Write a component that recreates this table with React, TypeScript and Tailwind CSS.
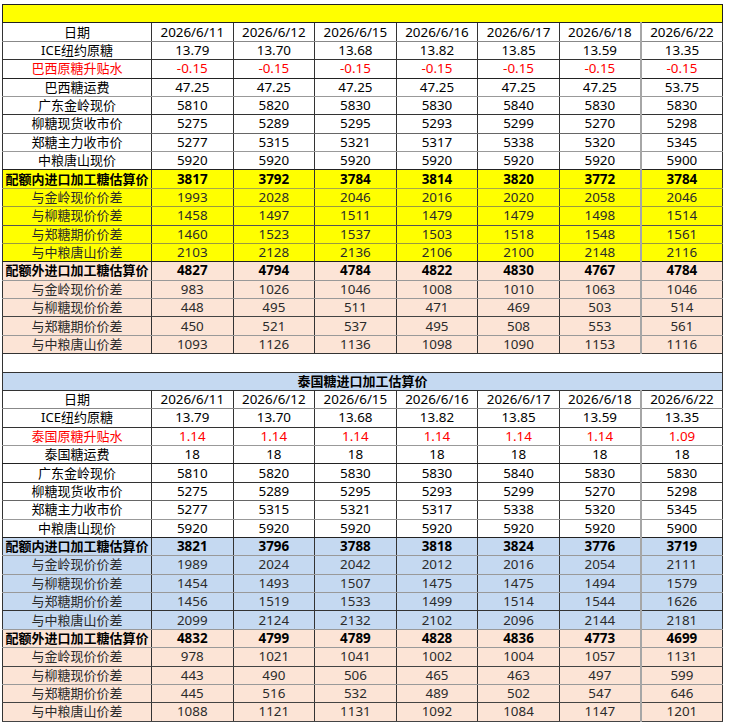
const dates = ["2026/6/11", "2026/6/12", "2026/6/15", "2026/6/16", "2026/6/17", "2026/6/18", "2026/6/22"]

type Row = {
  label: string
  values: string[]
  kind: "plain" | "red" | "bold" | "sub"
  bg: string
  line?: string
}

const common = (bg = "bg-white"): Row[] => [
  { label: "广东金岭现价", values: ["5810", "5820", "5830", "5830", "5840", "5830", "5830"], kind: "plain", bg, line: "border-b-[#333]" },
  { label: "柳糖现货收市价", values: ["5275", "5289", "5295", "5293", "5299", "5270", "5298"], kind: "plain", bg, line: "border-b-[#666]" },
  { label: "郑糖主力收市价", values: ["5277", "5315", "5321", "5317", "5338", "5320", "5345"], kind: "plain", bg, line: "border-b-[#999]" },
  { label: "中粮唐山现价", values: ["5920", "5920", "5920", "5920", "5920", "5920", "5900"], kind: "plain", bg, line: "border-b-[#222]" },
]

const subLabels = ["与金岭现价价差", "与柳糖现价价差", "与郑糖期价价差", "与中粮唐山价差"]

function section(title: string, main: string[], subs: string[][], bg: string, lines: string[]): Row[] {
  return [
    { label: title, values: main, kind: "bold", bg, line: lines[0] },
    ...subs.map((v, i) => ({ label: subLabels[i], values: v, kind: "sub" as const, bg, line: lines[i + 1] })),
  ]
}

const brazil: Row[] = [
  { label: "ICE纽约原糖", values: ["13.79", "13.70", "13.68", "13.82", "13.85", "13.59", "13.35"], kind: "plain", bg: "bg-white", line: "border-b-[#333]" },
  { label: "巴西原糖升贴水", values: Array(7).fill("-0.15"), kind: "red", bg: "bg-white", line: "border-b-[#222]" },
  { label: "巴西糖运费", values: ["47.25", "47.25", "47.25", "47.25", "47.25", "47.25", "53.75"], kind: "plain", bg: "bg-white", line: "border-b-[#999]" },
  ...common(),
  ...section(
    "配额内进口加工糖估算价",
    ["3817", "3792", "3784", "3814", "3820", "3772", "3784"],
    [
      ["1993", "2028", "2046", "2016", "2020", "2058", "2046"],
      ["1458", "1497", "1511", "1479", "1479", "1498", "1514"],
      ["1460", "1523", "1537", "1503", "1518", "1548", "1561"],
      ["2103", "2128", "2136", "2106", "2100", "2148", "2116"],
    ],
    "bg-[#ffff00]",
    ["border-b-[#a8a84a]", "border-b-[#9a9a40]", "border-b-[#555]", "border-b-[#9a9a40]", "border-b-[#222]"],
  ),
  ...section(
    "配额外进口加工糖估算价",
    ["4827", "4794", "4784", "4822", "4830", "4767", "4784"],
    [
      ["983", "1026", "1046", "1008", "1010", "1063", "1046"],
      ["448", "495", "511", "471", "469", "503", "514"],
      ["450", "521", "537", "495", "508", "553", "561"],
      ["1093", "1126", "1136", "1098", "1090", "1153", "1116"],
    ],
    "bg-[#fce4d6]",
    ["border-b-[#999]", "border-b-[#999]", "border-b-[#444]", "border-b-[#999]", "border-b-[#333]"],
  ),
]

const thai: Row[] = [
  { label: "ICE纽约原糖", values: ["13.79", "13.70", "13.68", "13.82", "13.85", "13.59", "13.35"], kind: "plain", bg: "bg-white", line: "border-b-[#333]" },
  { label: "泰国原糖升贴水", values: ["1.14", "1.14", "1.14", "1.14", "1.14", "1.14", "1.09"], kind: "red", bg: "bg-white", line: "border-b-[#999]" },
  { label: "泰国糖运费", values: Array(7).fill("18"), kind: "plain", bg: "bg-white", line: "border-b-[#222]" },
  ...common(),
  ...section(
    "配额内进口加工糖估算价",
    ["3821", "3796", "3788", "3818", "3824", "3776", "3719"],
    [
      ["1989", "2024", "2042", "2012", "2016", "2054", "2111"],
      ["1454", "1493", "1507", "1475", "1475", "1494", "1579"],
      ["1456", "1519", "1533", "1499", "1514", "1544", "1626"],
      ["2099", "2124", "2132", "2102", "2096", "2144", "2181"],
    ],
    "bg-[#c5d9f1]",
    ["border-b-[#999]", "border-b-[#999]", "border-b-[#999]", "border-b-[#333]", "border-b-[#999]"],
  ),
  ...section(
    "配额外进口加工糖估算价",
    ["4832", "4799", "4789", "4828", "4836", "4773", "4699"],
    [
      ["978", "1021", "1041", "1002", "1004", "1057", "1131"],
      ["443", "490", "506", "465", "463", "497", "599"],
      ["445", "516", "532", "489", "502", "547", "646"],
      ["1088", "1121", "1131", "1092", "1084", "1147", "1201"],
    ],
    "bg-[#fce4d6]",
    ["border-b-[#999]", "border-b-[#444]", "border-b-[#999]", "border-b-[#444]", "border-b-[#444]"],
  ),
]

function DataRow({ row }: { row: Row }) {
  const tone =
    row.kind === "red" ? "text-[#ff0000]" : row.kind === "sub" ? "text-[#2b2b2b]" : "text-black"
  const weight = row.kind === "bold" ? "font-bold" : "font-normal"
  return (
    <tr className={`h-[18.38px] ${row.bg}`}>
      <td className={`border-x border-x-[#333] border-b ${row.line} text-center ${tone} ${weight} whitespace-nowrap`}>
        {row.label}
      </td>
      {row.values.map((v, i) => (
        <td
          key={i}
          className={`border-b ${row.line} text-center text-[13.4px] ${tone} ${weight} ${
            i === 6 ? "border-l-2 border-l-[#a6a6a6] border-r border-r-[#333]" : "border-r border-r-[#333]"
          }`}
        >
          {v}
        </td>
      ))}
    </tr>
  )
}

function DateRow() {
  return (
    <tr className="h-[18.38px] bg-white">
      <td className="border-x border-x-[#333] border-b border-b-[#888] text-center">日期</td>
      {dates.map((d, i) => (
        <td
          key={d}
          className={`border-b border-b-[#888] text-center text-[13.4px] ${
            i === 6 ? "border-l-2 border-l-[#a6a6a6] border-r border-r-[#333]" : "border-r border-r-[#333]"
          }`}
        >
          {d}
        </td>
      ))}
    </tr>
  )
}

export default function App() {
  return (
    <div className="min-h-[727px] bg-white pl-[2px] pt-[4px] text-[13px] leading-[17px] text-black [font-family:'Noto_Sans','Noto_Sans_CJK_SC',sans-serif]">
      <table className="w-[721px] table-fixed border-collapse">
        <colgroup>
          <col className="w-[149px]" />
          {dates.map((d) => (
            <col key={d} />
          ))}
        </colgroup>
        <tbody>
          {/* 巴西糖 */}
          <tr className="h-[18.38px] bg-[#ffff00]">
            <td colSpan={8} className="border border-[#222]" />
          </tr>
          <DateRow />
          {brazil.map((r, i) => (
            <DataRow key={`b${i}`} row={r} />
          ))}

          <tr className="h-[18.38px] bg-white">
            <td colSpan={8} className="border-x border-x-[#333] border-b border-b-[#333]" />
          </tr>

          {/* 泰国糖 */}
          <tr className="h-[18.38px] bg-[#c5d9f1]">
            <td colSpan={8} className="border border-[#333] text-center font-bold">
              泰国糖进口加工估算价
            </td>
          </tr>
          <DateRow />
          {thai.map((r, i) => (
            <DataRow key={`t${i}`} row={r} />
          ))}
        </tbody>
      </table>
    </div>
  )
}
